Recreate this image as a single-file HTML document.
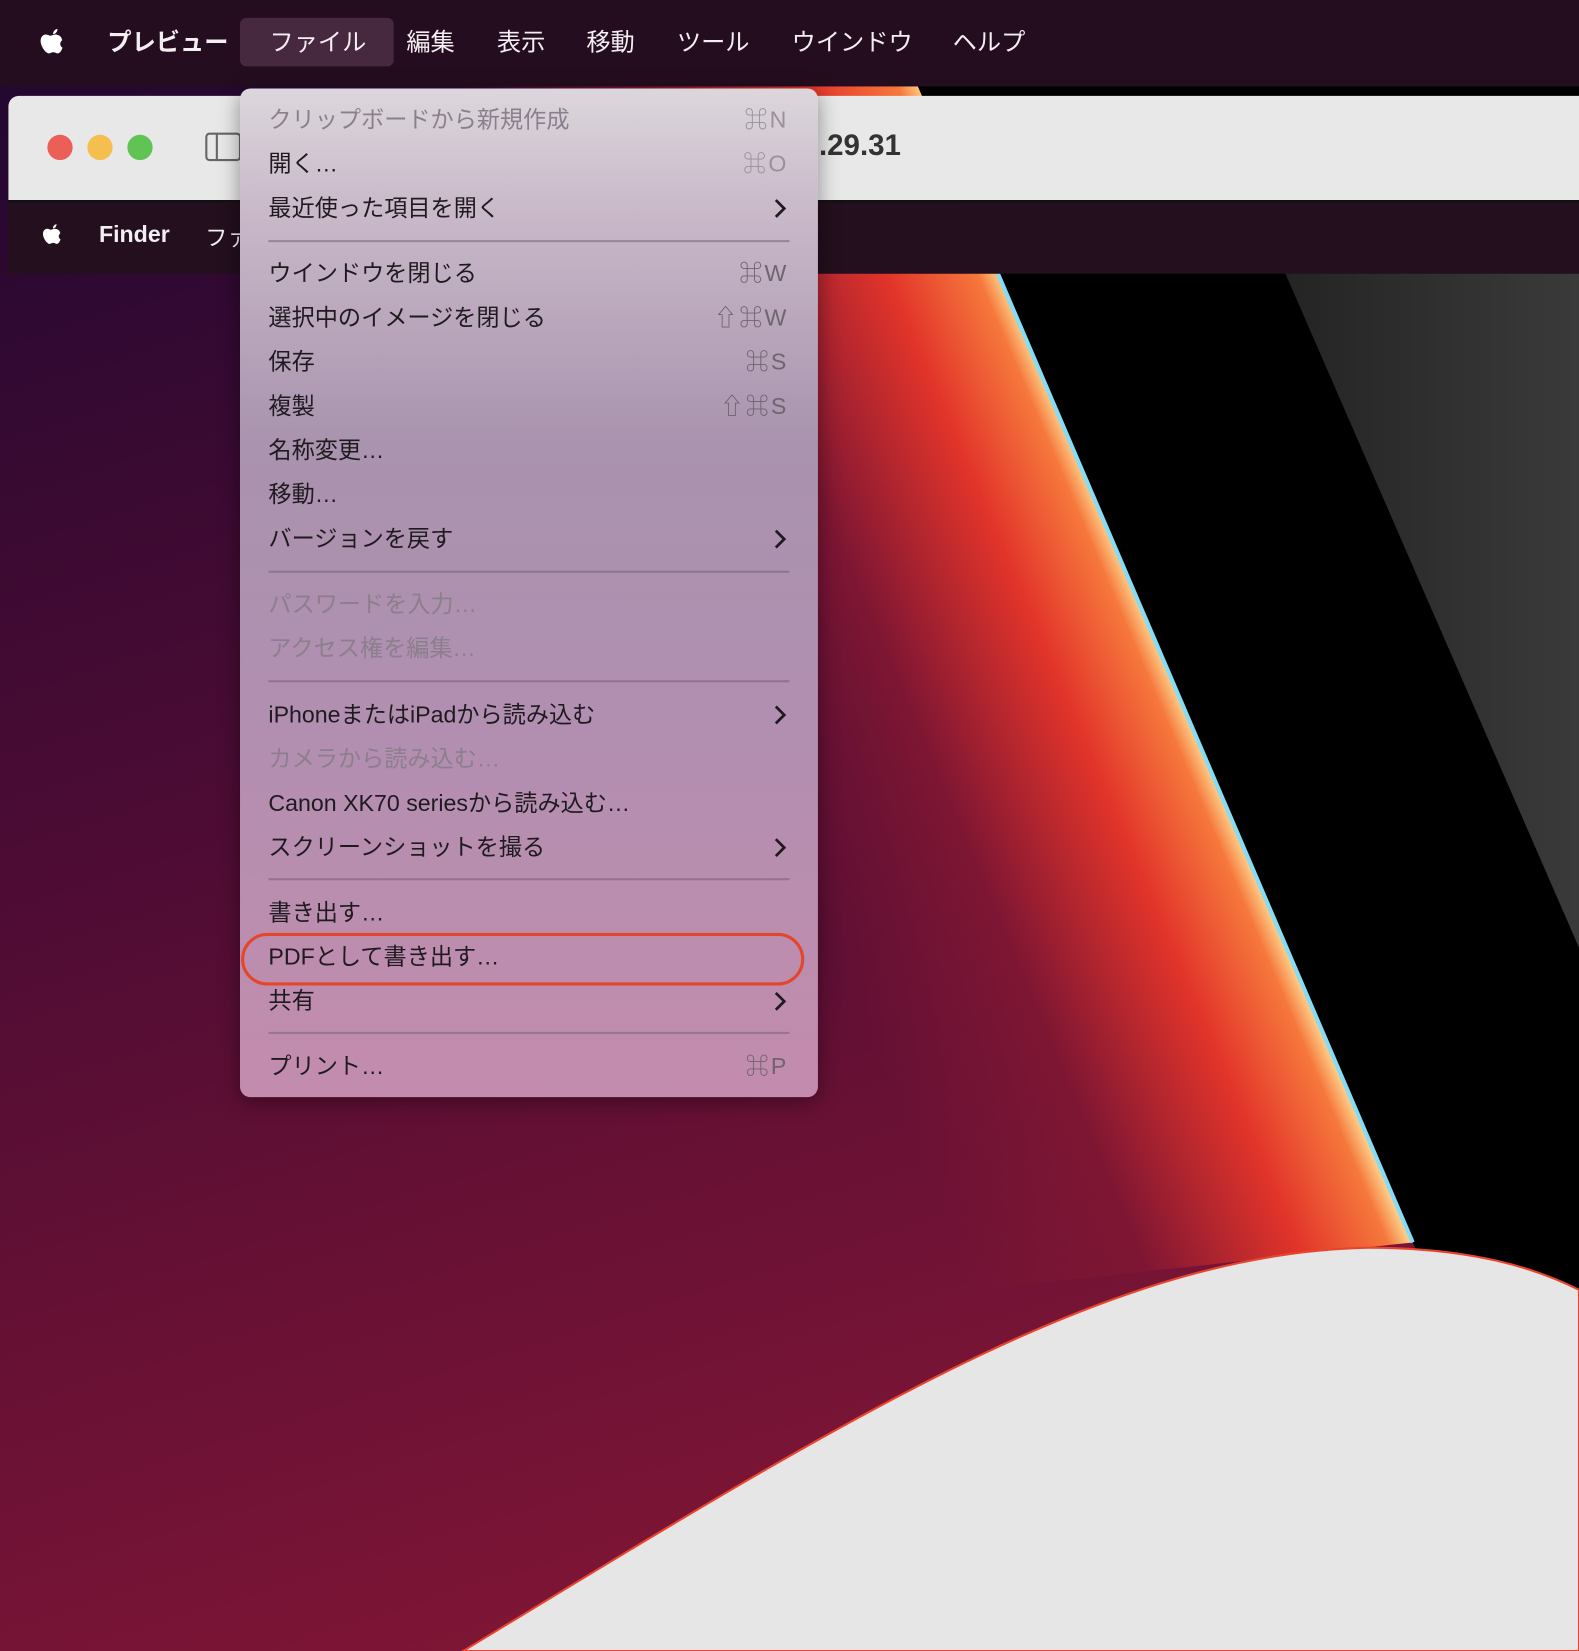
<!DOCTYPE html>
<html><head><meta charset="utf-8"><style>
html,body{margin:0;padding:0;width:1579px;height:1651px;overflow:hidden;background:#2a0a30}
#w{position:absolute;left:0;top:0;width:1500px;height:1568px;transform-origin:0 0;transform:scale(1.05267,1.05293);font-family:"Liberation Sans","Noto Sans CJK JP",sans-serif}
.abs{position:absolute}
.mb{left:0;top:0;width:1500px;height:82px;background:#240d1f}
.mi{position:absolute;top:22px;font-size:23px;color:#f4eef3;line-height:36px}
.menu{left:228px;top:84px;width:549px;height:958px;border-radius:10px;background:linear-gradient(180deg,#dcd7dc 0%,#c9b9c9 12%,#a993ae 35%,#b08fb0 60%,#c38cae 100%);box-shadow:0 4px 20px rgba(0,0,0,.4)}
.it{position:absolute;left:27px;font-size:22px;color:#1f1a20;line-height:30px;white-space:nowrap}
.dis{color:#8b7f8d}
.sc{position:absolute;right:28px;font-size:22px;color:#6f6470;line-height:30px;letter-spacing:2px}
.sc.d{color:#9a8f9c}
.ch{position:absolute;right:30px;width:12px;height:20px}
.sep{position:absolute;left:27px;right:27px;height:2px;background:rgba(120,95,120,.55)}
</style></head><body><div id="w">
<svg class="abs" style="left:0;top:0" width="1500" height="1568" viewBox="0 0 1500 1568">
<defs>
<linearGradient id="bg" x1="0" y1="0" x2="0.3" y2="1"><stop offset="0" stop-color="#1e0730"/><stop offset="0.5" stop-color="#4e0c34"/><stop offset="1" stop-color="#7e1535"/></linearGradient>
<linearGradient id="og" gradientUnits="userSpaceOnUse" x1="1145" y1="720" x2="777" y2="876"><stop offset="0" stop-color="#fdd08a"/><stop offset="0.05" stop-color="#f6783c"/><stop offset="0.25" stop-color="#e2342a"/><stop offset="0.6" stop-color="#7e1633"/><stop offset="1" stop-color="#7e1633" stop-opacity="0"/></linearGradient>
<linearGradient id="gr" x1="0" y1="0" x2="1" y2="0"><stop offset="0" stop-color="#222"/><stop offset="1" stop-color="#3a3a3a"/></linearGradient>
</defs>
<rect width="1500" height="1568" fill="url(#bg)"/>
<polygon points="872,82 1342,1180 700,1250 400,82" fill="url(#og)"/>
<polygon points="872,82 1500,82 1500,1568 1342,1180" fill="#000"/>
<polygon points="1195,200 1500,200 1500,900" fill="url(#gr)"/>
<line x1="948" y1="260" x2="1342" y2="1180" stroke="#86dcf4" stroke-width="4"/>
<path d="M440 1568 C800 1350 1050 1190 1300 1185 C1400 1185 1460 1205 1500 1225 L1500 1568 Z" fill="#e6e6e6" stroke="#e8452c" stroke-width="2"/>
</svg>
<div class="abs mb"></div>
<svg class="abs" style="left:36px;top:24px" width="28" height="32" viewBox="0 0 24 28"><path fill="#fff" d="M16 0c.2 2-1.4 4.4-3.6 4.4C12.2 2.5 13.8.3 16 0zM20 9.5c-2 1.2-2.5 4.5.2 6.2-.6 1.8-2 4.6-3.8 4.7-1.5 0-2-1-3.8-1s-2.5 1-3.8 1C6.2 20.3 2 14.5 2 10c0-3.5 2.3-5.3 4.4-5.3 1.6 0 2.8 1 3.8 1s2.4-1.1 4.2-1c.8 0 3 .3 4.6 2.2z" transform="translate(0,3)"/></svg>
<div class="mi" style="left:102px;font-weight:bold">プレビュー</div>
<div class="abs" style="left:228px;top:17px;width:146px;height:46px;border-radius:6px;background:#47293f"></div>
<div class="mi" style="left:256px">ファイル</div>
<div class="mi" style="left:386px">編集</div>
<div class="mi" style="left:472px">表示</div>
<div class="mi" style="left:557px">移動</div>
<div class="mi" style="left:643px">ツール</div>
<div class="mi" style="left:752px">ウインドウ</div>
<div class="mi" style="left:905px">ヘルプ</div>
<div class="abs" style="left:8px;top:91px;width:1492px;height:99px;background:#e8e8e8;border-radius:10px 0 0 0"></div>
<div class="abs" style="left:45px;top:128px;width:24px;height:24px;border-radius:50%;background:#ec5f56"></div>
<div class="abs" style="left:83px;top:128px;width:24px;height:24px;border-radius:50%;background:#f4bf4f"></div>
<div class="abs" style="left:121px;top:128px;width:24px;height:24px;border-radius:50%;background:#5fc454"></div>
<div class="abs" style="left:195px;top:126px;width:34px;height:27px;border:2px solid #666;border-radius:4px;box-sizing:border-box"></div>
<div class="abs" style="left:205px;top:127px;width:2px;height:25px;background:#666"></div>
<div class="abs" style="left:778px;top:122px;font-size:28px;font-weight:bold;color:#333">.29.31</div>
<div class="abs" style="left:8px;top:190px;width:1492px;height:70px;background:#230f1d"></div>
<div class="abs" style="left:8px;top:190px;width:1492px;height:2px;background:#111"></div>
<svg class="abs" style="left:39px;top:210px" width="22" height="26" viewBox="0 0 24 28"><path fill="#fff" d="M16 0c.2 2-1.4 4.4-3.6 4.4C12.2 2.5 13.8.3 16 0zM20 9.5c-2 1.2-2.5 4.5.2 6.2-.6 1.8-2 4.6-3.8 4.7-1.5 0-2-1-3.8-1s-2.5 1-3.8 1C6.2 20.3 2 14.5 2 10c0-3.5 2.3-5.3 4.4-5.3 1.6 0 2.8 1 3.8 1s2.4-1.1 4.2-1c.8 0 3 .3 4.6 2.2z" transform="translate(0,3)"/></svg>
<div class="abs" style="left:94px;top:210px;font-size:22px;font-weight:bold;color:#f2eef2">Finder</div>
<div class="abs" style="left:195px;top:210px;font-size:21px;color:#f2eef2">ファ</div>
<div class="abs menu">
<div class="it dis" style="top:15px">クリップボードから新規作成</div><div class="sc d" style="top:15px">⌘N</div>
<div class="it" style="top:57px">開く…</div><div class="sc d" style="top:57px">⌘O</div>
<div class="it" style="top:99px">最近使った項目を開く</div><svg class="ch" style="top:104px" viewBox="0 0 12 20"><path d="M2 2l8 8-8 8" fill="none" stroke="#1f1a20" stroke-width="2.6"/></svg>
<div class="sep" style="top:144px"></div>
<div class="it" style="top:161px">ウインドウを閉じる</div><div class="sc" style="top:161px">⌘W</div>
<div class="it" style="top:203px">選択中のイメージを閉じる</div><div class="sc" style="top:203px">⇧⌘W</div>
<div class="it" style="top:245px">保存</div><div class="sc" style="top:245px">⌘S</div>
<div class="it" style="top:287px">複製</div><div class="sc" style="top:287px">⇧⌘S</div>
<div class="it" style="top:329px">名称変更…</div>
<div class="it" style="top:371px">移動…</div>
<div class="it" style="top:413px">バージョンを戻す</div><svg class="ch" style="top:418px" viewBox="0 0 12 20"><path d="M2 2l8 8-8 8" fill="none" stroke="#1f1a20" stroke-width="2.6"/></svg>
<div class="sep" style="top:458px"></div>
<div class="it dis" style="top:475px">パスワードを入力…</div>
<div class="it dis" style="top:517px">アクセス権を編集…</div>
<div class="sep" style="top:562px"></div>
<div class="it" style="top:580px">iPhoneまたはiPadから読み込む</div><svg class="ch" style="top:585px" viewBox="0 0 12 20"><path d="M2 2l8 8-8 8" fill="none" stroke="#1f1a20" stroke-width="2.6"/></svg>
<div class="it dis" style="top:622px">カメラから読み込む…</div>
<div class="it" style="top:664px">Canon XK70 seriesから読み込む…</div>
<div class="it" style="top:706px">スクリーンショットを撮る</div><svg class="ch" style="top:711px" viewBox="0 0 12 20"><path d="M2 2l8 8-8 8" fill="none" stroke="#1f1a20" stroke-width="2.6"/></svg>
<div class="sep" style="top:750px"></div>
<div class="it" style="top:768px">書き出す…</div>
<div class="it" style="top:810px">PDFとして書き出す…</div>
<div class="it" style="top:852px">共有</div><svg class="ch" style="top:857px" viewBox="0 0 12 20"><path d="M2 2l8 8-8 8" fill="none" stroke="#1f1a20" stroke-width="2.6"/></svg>
<div class="sep" style="top:896px"></div>
<div class="it" style="top:914px">プリント…</div><div class="sc" style="top:914px">⌘P</div>
</div>
<div class="abs" style="left:229px;top:886px;width:535px;height:50px;border:3px solid #e4462b;border-radius:26px;box-sizing:border-box"></div>
</div></body></html>
